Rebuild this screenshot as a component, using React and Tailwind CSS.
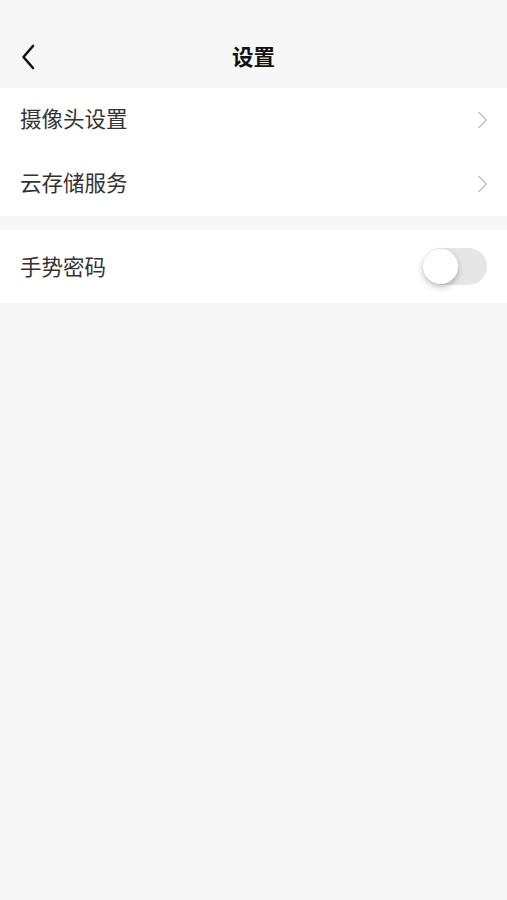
import { useState } from "react";

const font = { fontFamily: '"Noto Sans CJK SC", "Noto Sans", sans-serif' };

const Chevron = () => (
  <svg width="12" height="18" viewBox="0 0 12 18" fill="none">
    <path d="M2 1.5 L9.5 9 L2 16.5" stroke="#c2c2c2" strokeWidth="1.6" strokeLinecap="round" strokeLinejoin="round" />
  </svg>
);

const LinkRow = ({ label }) => (
  <div className="flex items-center justify-between h-16 pl-[20px] pr-[18px]">
    <span className="text-[21.5px] text-[#333333] leading-none pb-[5px]">{label}</span>
    <Chevron />
  </div>
);

export default function App() {
  const [gesture, setGesture] = useState(false);

  return (
    <div className="min-h-[900px] w-full bg-[#f7f7f7]" style={font}>
      {/* header */}
      <div className="relative flex items-center justify-center h-[88px] pt-[23px]">
        <button className="absolute left-[20px] top-[44px] p-0">
          <svg width="18" height="26" viewBox="0 0 18 26" fill="none">
            <path d="M13 2 L3.5 13 L13 24" stroke="#111111" strokeWidth="2.6" strokeLinecap="round" strokeLinejoin="round" />
          </svg>
        </button>
        <h1 className="text-[21.5px] font-semibold text-[#111111] leading-none">设置</h1>
      </div>

      {/* group 1 */}
      <div className="bg-white">
        <LinkRow label="摄像头设置" />
        <LinkRow label="云存储服务" />
      </div>

      {/* group 2 */}
      <div className="bg-white mt-[14px] h-[73px] flex items-center justify-between pl-[20px] pr-[20px]">
        <span className="text-[21.5px] text-[#333333] leading-none pb-[2px]">手势密码</span>
        <button
          onClick={() => setGesture(!gesture)}
          className={`relative w-[64px] h-[37px] rounded-full transition-colors ${gesture ? "bg-[#4cd964]" : "bg-[#e6e6e6]"}`}
        >
          <span
            className={`absolute top-[1px] w-[35px] h-[35px] rounded-full bg-white shadow-[0_3px_6px_rgba(0,0,0,0.25)] transition-all ${gesture ? "left-[28px]" : "left-0"}`}
          />
        </button>
      </div>
    </div>
  );
}
